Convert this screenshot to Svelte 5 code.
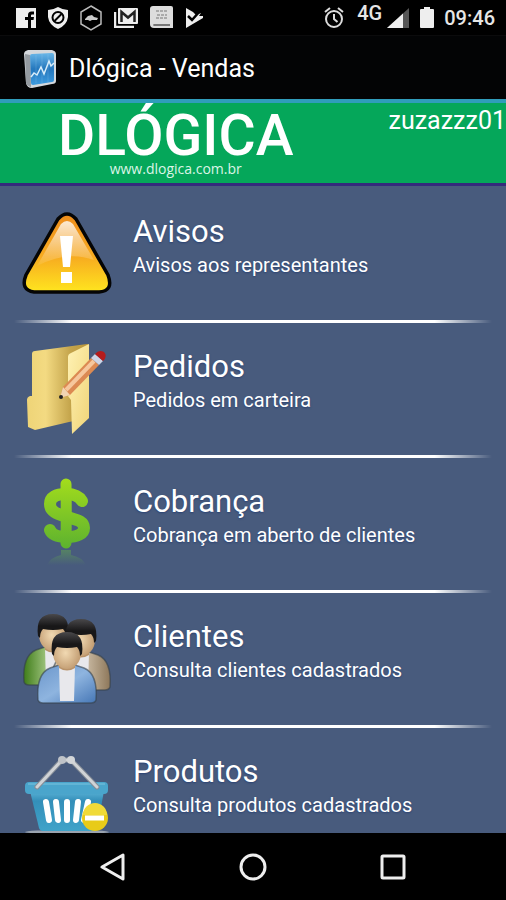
<!--
    Main menu of the sales app: status bar, title bar, brand banner,
    list of sections and the system navigation bar.
-->
<script lang="ts">
    type Item = { id: string; title: string; subtitle: string };

    let user = $state("zuzazzz01");

    const items: Item[] = [
        { id: "avisos", title: "Avisos", subtitle: "Avisos aos representantes" },
        { id: "pedidos", title: "Pedidos", subtitle: "Pedidos em carteira" },
        { id: "cobranca", title: "Cobrança", subtitle: "Cobrança em aberto de clientes" },
        { id: "clientes", title: "Clientes", subtitle: "Consulta clientes cadastrados" },
        { id: "produtos", title: "Produtos", subtitle: "Consulta produtos cadastrados" },
    ];
</script>

{#snippet person(shirt: string)}
    <path d="M-11 70Q-13 44 1 38L10 35H26L35 38Q49 44 47 70Q46 73 42 73H-6Q-10 73 -11 70Z" fill={shirt} stroke="#333f49" stroke-opacity="0.6" stroke-width="1.5" />
    <path d="M10 36H26L25 71H11Z" fill="#e8e8ec" />
    <path d="M10 30H26V38Q18 43 10 38Z" fill="#b9936a" />
    <ellipse cx="18" cy="23" rx="14" ry="16" fill="url(#skin)" />
    <path d="M3 24Q0 2 18 2Q36 2 33 24L31 26Q31 20 28 17Q18 19 8 17Q5 20 5 26Z" fill="url(#hair)" />
{/snippet}

<div class="screen">
    <header class="status-bar">
        <div class="notifications">
            <svg viewBox="0 0 20 20" width="20" height="20" aria-hidden="true">
                <rect width="20" height="20" fill="#eee" />
                <path d="M12 20V12H9V9H12V7Q12 3.5 15.5 3.5H18V6.5H16Q15 6.5 15 7.5V9H18L17.5 12H15V20Z" fill="#000" />
            </svg>
            <svg viewBox="0 0 20 22" width="20" height="22" aria-hidden="true">
                <path d="M10 0Q15 3 20 3V10Q19 18 10 22Q1 18 0 10V3Q5 3 10 0Z" fill="#eee" />
                <circle cx="10" cy="10.5" r="5.5" fill="none" stroke="#000" stroke-width="2" />
                <path d="M6.5 14L13.5 7" stroke="#000" stroke-width="2" />
            </svg>
            <svg viewBox="0 0 22 26" width="22" height="26" aria-hidden="true">
                <path d="M11 1L21 7V19L11 25L1 19V7Z" fill="none" stroke="#bbb" stroke-width="1.5" />
                <path d="M5 14L8 11L12 10L14 12L18 13L17 15H12L10 16L8 15H5Z" fill="#ccc" />
            </svg>
            <svg viewBox="0 0 24 20" width="24" height="20" aria-hidden="true">
                <path d="M1 4V19H20" fill="none" stroke="#eee" stroke-width="2.5" />
                <rect x="4" width="20" height="16" rx="1" fill="#eee" />
                <path d="M7.5 14V4L14 9.5L20.5 4V14" fill="none" stroke="#222" stroke-width="2.5" />
            </svg>
            <svg viewBox="0 0 23 23" width="23" height="23" aria-hidden="true">
                <path d="M3 0H21Q23 0 23 2V22H4Q0 22 0 18V3Q0 0 3 0Z" fill="#ddd" />
                <path d="M4 18H20V20H4Q2 19 4 18Z" fill="#777" />
                <path d="M6 5H18M7 9H17M6 12H18" stroke="#999" stroke-width="1.5" stroke-dasharray="3 1" />
            </svg>
            <svg viewBox="0 0 18 20" width="18" height="20" aria-hidden="true">
                <path d="M1 0L8 4L11 7L16 5L14 8L18 8V10L1 20Z" fill="#eee" />
                <path d="M3 8L7 12L15 3" fill="none" stroke="#000" stroke-width="2.5" />
            </svg>
        </div>
        <div class="system">
            <svg viewBox="0 0 20 22" width="20" height="22" aria-hidden="true">
                <circle cx="10" cy="12" r="8" fill="none" stroke="#ddd" stroke-width="2" />
                <path d="M10 7V12L13.5 15M1 5L6 1M19 5L14 1" fill="none" stroke="#ddd" stroke-width="2" />
            </svg>
            <span class="network">4G</span>
            <svg viewBox="0 0 22 20" width="22" height="20" aria-hidden="true">
                <path d="M22 0V20H0Z" fill="#555" />
                <path d="M16 5.5V20H0Z" fill="#eee" />
            </svg>
            <svg class="battery" viewBox="0 0 14 21" width="14" height="21" aria-hidden="true">
                <path d="M4 0H10V2H13Q14 2 14 3V20Q14 21 13 21H1Q0 21 0 20V3Q0 2 1 2H4Z" fill="#eee" />
            </svg>
            <time class="clock">09:46</time>
        </div>
    </header>

    <div class="title-bar">
        <svg viewBox="0 0 32 38" width="32" height="38" aria-hidden="true">
            <defs>
                <linearGradient id="app-blue" x1="0" y1="0" x2="0" y2="1">
                    <stop offset="0" stop-color="#68b6e8" />
                    <stop offset="0.5" stop-color="#2477bd" />
                    <stop offset="1" stop-color="#3c9bdf" />
                </linearGradient>
            </defs>
            <path d="M4 0L28 0Q32 1 32 4V31Q32 34 28 34L8 38Q3 38 2 33L0 4Q0 1 4 0Z" fill="#d4d8dc" />
            <path d="M1 4L6 5L7 37Q3 36 2 33Z" fill="#949ba1" />
            <path d="M8 4L28 3Q30 3 30 5V30Q30 32 28 32L9 35Q7 35 7 33L6 6Q6 4 8 4Z" fill="url(#app-blue)" />
            <path d="M12 5V33M18 4V33M24 4V32" stroke="#a9d6f2" stroke-opacity="0.2" />
            <path d="M7 27L10 23L13 25L17 17L20 24L25 11L27 16L30 13" fill="none" stroke="#d8edfa" stroke-width="1.5" />
        </svg>
        <h1>Dlógica - Vendas</h1>
    </div>

    <div class="banner">
        <div class="brand">
            <span class="brand-name">DLÓGICA</span>
            <a class="brand-site" href="#site">www.dlogica.com.br</a>
        </div>
        <span class="user">{user}</span>
    </div>

    <main class="menu">
        {#each items as item (item.id)}
            <a class="row" href="#{item.id}">
                <svg class="row-icon" viewBox="0 0 90 90" width="90" height="90" aria-hidden="true">
                    {#if item.id === "avisos"}
                        <defs>
                            <linearGradient id="warn" x1="0" y1="0" x2="0" y2="1">
                                <stop offset="0" stop-color="#ee8d1c" />
                                <stop offset="0.55" stop-color="#f7ab20" />
                                <stop offset="1" stop-color="#ffe51f" />
                            </linearGradient>
                            <linearGradient id="warn-shine" x1="0" y1="0" x2="0" y2="1">
                                <stop offset="0" stop-color="#fff" stop-opacity="0.8" />
                                <stop offset="1" stop-color="#fff" stop-opacity="0.05" />
                            </linearGradient>
                        </defs>
                        <path d="M36 11Q45 1 54 11L86 67Q92 83 77 84H12Q-2 82 4 67Z" fill="url(#warn)" stroke="#050505" stroke-width="3.5" />
                        <path d="M39 16Q45 10 51 16L72 52Q45 42 15 58Z" fill="url(#warn-shine)" />
                        <path d="M38 28H51L48 59H41ZM39 64H50V75H39Z" fill="#fff" />
                    {:else if item.id === "pedidos"}
                        <defs>
                            <linearGradient id="folder" x1="0" y1="0" x2="1" y2="0">
                                <stop offset="0" stop-color="#eed477" />
                                <stop offset="0.3" stop-color="#f3da82" />
                                <stop offset="0.7" stop-color="#c4a44b" />
                                <stop offset="1" stop-color="#b89539" />
                            </linearGradient>
                            <linearGradient id="flap" x1="0" y1="0" x2="1" y2="1">
                                <stop offset="0" stop-color="#fff2b4" />
                                <stop offset="1" stop-color="#f0d478" />
                            </linearGradient>
                        </defs>
                        <path d="M13 8L65 1Q68 1 67 4V75L47 79L13 87L6 84L5 57Q5 54 8 53H10V11Q10 8 13 8Z" fill="url(#folder)" />
                        <path d="M46 14Q46 11 49 10L67 1V75L50 91L49 57L46 53Z" fill="url(#flap)" />
                        <path d="M38 55L41 44L69 15L77 22L48 52Z" fill="#dc8a52" />
                        <path d="M44 47L72 18" stroke="#f6c79c" stroke-width="4" />
                        <path d="M38 55L41 44L48 52Z" fill="#f2d5b2" />
                        <path d="M69 15L73 11L81 18L77 22Z" fill="#cdd5e6" />
                        <path d="M73 11Q77 6 82 9Q86 13 81 18Z" fill="#b51c1c" />
                        <circle cx="39" cy="54" r="2" fill="#222" />
                    {:else if item.id === "cobranca"}
                        <defs>
                            <linearGradient id="money" gradientUnits="userSpaceOnUse" x1="0" y1="0" x2="0" y2="70">
                                <stop offset="0" stop-color="#a4dd1c" />
                                <stop offset="1" stop-color="#5db22f" />
                            </linearGradient>
                            <linearGradient id="money-fade" x1="0" y1="0" x2="0" y2="1">
                                <stop offset="0" stop-color="#62a94c" stop-opacity="0.5" />
                                <stop offset="1" stop-color="#62a94c" stop-opacity="0" />
                            </linearGradient>
                        </defs>
                        <path d="M39 72H49V77Q60 79 64 87H25Q29 79 39 77Z" fill="url(#money-fade)" />
                        <g fill="none" stroke="url(#money)" stroke-width="11" stroke-linecap="round">
                            <path d="M44 6Q44.5 35 44 65" />
                            <path d="M60 23C57 18 52 16 44 16C34 16 28 19 28 26C28 34 36 36 45 39C55 42 62 43 62 50C62 56 55 59 45 59C36 59 30 57 28 52" stroke-width="12" />
                        </g>
                    {:else if item.id === "clientes"}
                        <defs>
                            <radialGradient id="skin" cx="0.45" cy="0.5" r="0.6">
                                <stop offset="0" stop-color="#f1d9b2" />
                                <stop offset="1" stop-color="#bd966b" />
                            </radialGradient>
                            <linearGradient id="hair" x1="0" y1="0" x2="0" y2="1">
                                <stop offset="0" stop-color="#49484a" />
                                <stop offset="0.5" stop-color="#181718" />
                            </linearGradient>
                            <linearGradient id="shirt-green" x1="0" y1="0" x2="1" y2="0">
                                <stop offset="0" stop-color="#3f7d19" />
                                <stop offset="0.4" stop-color="#a1c580" />
                            </linearGradient>
                            <linearGradient id="shirt-tan" x1="0" y1="0" x2="1" y2="0">
                                <stop offset="0.5" stop-color="#d6c8b2" />
                                <stop offset="1" stop-color="#8d775a" />
                            </linearGradient>
                            <linearGradient id="shirt-blue" x1="0" y1="0" x2="1" y2="1">
                                <stop offset="0" stop-color="#6b96cb" />
                                <stop offset="0.5" stop-color="#8eb4df" />
                                <stop offset="1" stop-color="#4677b6" />
                            </linearGradient>
                        </defs>
                        <g transform="translate(13 -1)">{@render person("url(#shirt-green)")}</g>
                        <g transform="translate(41 4)">{@render person("url(#shirt-tan)")}</g>
                        <g transform="translate(27 17)">{@render person("url(#shirt-blue)")}</g>
                    {:else}
                        <defs>
                            <linearGradient id="basket" x1="0" y1="0" x2="0" y2="1">
                                <stop offset="0" stop-color="#5ab2d6" />
                                <stop offset="0.25" stop-color="#348fb9" />
                                <stop offset="1" stop-color="#3fa3c9" />
                            </linearGradient>
                        </defs>
                        <ellipse cx="45" cy="84" rx="42" ry="2" fill="#9aa3af" />
                        <path d="M8 43H82L75 80Q74 83 71 83H21Q18 83 17 80Z" fill="url(#basket)" />
                        <rect x="3" y="34" width="83" height="12" rx="4" fill="#4aa5cc" />
                        <path d="M6 36H83" stroke="#62b4d5" stroke-width="2" />
                        <path d="M24 54L27 72M34 54L36 72M45 54V72M56 54L54 72M66 54L62 72" stroke="#fff" stroke-width="6" stroke-linecap="round" />
                        <path d="M15 39L40 12H49L75 39" fill="none" stroke="#848c96" stroke-width="5" stroke-linecap="round" />
                        <path d="M15 39L40 12H49L75 39" fill="none" stroke="#d0d3d6" stroke-width="3" stroke-linecap="round" />
                        <circle cx="40" cy="12" r="4" fill="#bfc3c8" />
                        <circle cx="49" cy="12" r="4" fill="#d3d6d9" />
                        <circle cx="73" cy="70" r="13" fill="#e8cb18" />
                        <path d="M61 67A12 12 0 0 1 85 67Z" fill="#f0da38" />
                        <path d="M63 70H82" stroke="#fff" stroke-width="5" />
                    {/if}
                </svg>
                <span class="row-text">
                    <span class="row-title">{item.title}</span>
                    <span class="row-subtitle">{item.subtitle}</span>
                </span>
            </a>
            <div class="divider"></div>
        {/each}
    </main>

    <nav class="nav-bar">
        <button aria-label="Voltar">
            <svg viewBox="0 0 28 28" width="28" height="28"><path d="M24 2V26L3 14Z" /></svg>
        </button>
        <button aria-label="Início">
            <svg viewBox="0 0 28 28" width="28" height="28"><circle cx="14" cy="14" r="12" /></svg>
        </button>
        <button aria-label="Recentes">
            <svg viewBox="0 0 28 28" width="28" height="28"><rect x="3" y="3" width="22" height="22" rx="1" /></svg>
        </button>
    </nav>
</div>

<style>
    :global(body) {
        margin: 0;
        background: #000;
    }
    .screen {
        display: flex;
        flex-direction: column;
        height: 100vh;
        background: #485b7d;
        color: #fff;
        font-family: Roboto, "Liberation Sans", sans-serif;
    }

    .status-bar {
        display: flex;
        align-items: center;
        justify-content: space-between;
        flex-shrink: 0;
        height: 35px;
        padding: 0 11px 0 16px;
        background: #000;
        color: #e6e6e6;
    }
    .notifications {
        display: flex;
        align-items: center;
        gap: 12px;
    }
    .system {
        display: flex;
        align-items: center;
    }
    .network {
        align-self: flex-start;
        margin: 0 5px 0 13px;
        font-size: 20px;
        font-weight: 500;
        line-height: 14px;
    }
    .battery {
        margin: 0 10px 0 11px;
    }
    .clock {
        font-size: 20px;
        font-weight: 500;
    }

    .title-bar {
        display: flex;
        align-items: center;
        gap: 13px;
        flex-shrink: 0;
        height: 64px;
        padding: 2px 24px 0;
        box-sizing: border-box;
        background: #030405;
        border-top: 1px solid #0b0b0c;
    }
    h1 {
        margin: 0;
        font-size: 25px;
        font-weight: 400;
    }

    .banner {
        display: flex;
        justify-content: space-between;
        flex-shrink: 0;
        padding-left: 58px;
        background: #05a75a;
        border-top: 4px solid #2f9dbb;
        border-bottom: 3px solid #352a7c;
    }
    .brand {
        display: flex;
        flex-direction: column;
        padding: 4px 0 6px;
    }
    .brand-name {
        font-size: 57px;
        font-weight: 500;
        line-height: 58px;
    }
    .brand-site {
        align-self: center;
        margin-top: -4px;
        color: #dcf5e6;
        font-family: "Open Sans", "Noto Sans", sans-serif;
        font-size: 14px;
        line-height: 16px;
        text-decoration: none;
    }
    .user {
        font-size: 25px;
        line-height: 36px;
    }

    .menu {
        flex: 1;
        min-height: 0;
        padding-top: 2px;
        overflow-y: auto;
        scrollbar-width: none;
    }
    .row {
        display: flex;
        gap: 21px;
        padding: 20px 22px 22px;
        color: #fff;
        text-decoration: none;
    }
    .row-icon {
        flex-shrink: 0;
        overflow: visible;
    }
    .row-text {
        display: flex;
        flex-direction: column;
        padding-top: 6px;
    }
    .row-title {
        font-size: 31px;
        line-height: 36px;
        text-shadow: 0 1px 2px #2a4272;
    }
    .row-subtitle {
        font-size: 20px;
        line-height: 30px;
        text-shadow: 0 1px 2px #2a4272;
    }
    .divider {
        height: 3px;
        margin: 0 14px;
        background: linear-gradient(90deg, transparent, #fff 12%, #fff 88%, transparent);
    }

    .nav-bar {
        display: flex;
        align-items: center;
        justify-content: center;
        gap: 92px;
        flex-shrink: 0;
        height: 67px;
        background: #000;
    }
    .nav-bar button {
        display: flex;
        align-items: center;
        justify-content: center;
        width: 48px;
        height: 48px;
        padding: 0;
        border: 0;
        background: none;
        cursor: pointer;
    }
    .nav-bar path,
    .nav-bar circle,
    .nav-bar rect {
        fill: none;
        stroke: #eee;
        stroke-width: 3;
        stroke-linejoin: round;
    }
</style>
